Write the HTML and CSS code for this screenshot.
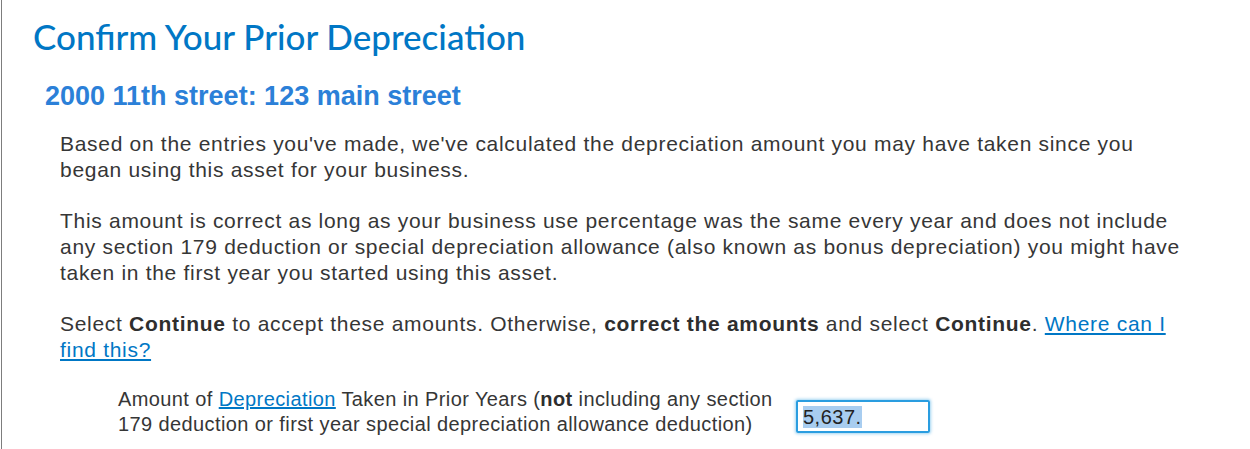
FILE: index.html
```html
<!DOCTYPE html>
<html lang="en">
<head>
<meta charset="utf-8">
<title>Confirm Your Prior Depreciation</title>
<link rel="stylesheet" href="styles.css">
</head>
<body>
<div class="page">
  <h1 class="title">Confirm Your Prior Depreciation</h1>
  <h2 class="subtitle">2000 11th street: 123 main street</h2>
  <div class="content">
    <p class="para">Based on the entries you've made, we've calculated the depreciation amount you may have taken since you began using this asset for your business.</p>
    <p class="para">This amount is correct as long as your business use percentage was the same every year and does not include any section 179 deduction or special depreciation allowance (also known as bonus depreciation) you might have taken in the first year you started using this asset.</p>
    <p class="para">Select <b>Continue</b> to accept these amounts. Otherwise, <b>correct the amounts</b> and select <b>Continue</b>. <a class="link" href="#">Where can I find this?</a></p>
    <div class="field">
      <div class="label">Amount of <a class="link" href="#">Depreciation</a> Taken in Prior Years (<b>not</b> including any section 179 deduction or first year special depreciation allowance deduction)</div>
      <div class="input"><span class="sel">5,637.</span></div>
    </div>
  </div>
</div>
</body>
</html>
```

FILE: styles.css
```css
html, body {
  margin: 0;
  padding: 0;
  background: #ffffff;
}

.page {
  margin-left: 1px;
  border-left: 1px solid #7d7d7d;
  min-height: 449px;
  box-sizing: border-box;
  padding-top: 14px;
  font-family: "Liberation Sans", Arial, sans-serif;
  color: #363636;
}

.title {
  margin: 0;
  padding-left: 31px;
  font-family: Lato, "Noto Sans", sans-serif;
  font-weight: 500;
  font-size: 35px;
  line-height: 44px;
  color: #0077c5;
}

.subtitle {
  margin: 22px 0 0;
  padding-left: 43px;
  font-size: 27px;
  line-height: 32px;
  font-weight: bold;
  color: #2b80d8;
}

.content {
  padding-left: 58px;
  width: 1125px;
  margin-top: 19px;
}

.para {
  margin: 0 0 25px;
  font-size: 21px;
  line-height: 26px;
  letter-spacing: 0.7px;
}

.para b, .label b {
  color: #2e2e2e;
}

.link {
  color: #0077c5;
  text-decoration: underline;
}

.field {
  display: flex;
  align-items: center;
  padding-left: 58px;
  gap: 12px;
  margin-top: -1px;
}

.label {
  width: 666px;
  font-size: 20px;
  line-height: 25px;
  letter-spacing: 0.4px;
}

.input {
  width: 134px;
  height: 33px;
  box-sizing: border-box;
  border: 2px solid #2a9de0;
  border-radius: 2px;
  box-shadow: 0 0 3px 1px rgba(42, 157, 224, 0.45);
  padding: 3px 0 0 5px;
  font-size: 20px;
  line-height: 24px;
  letter-spacing: 0.5px;
  color: #222;
  margin-top: 8px;
}

.sel {
  background: #a8cdf0;
}
```
